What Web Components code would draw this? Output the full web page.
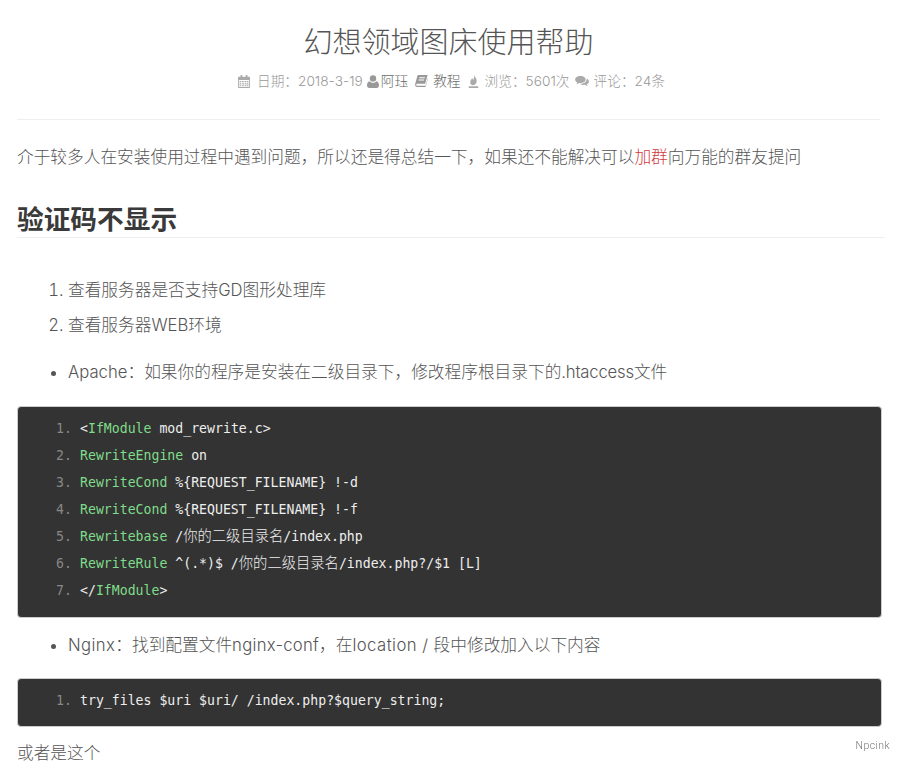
<!DOCTYPE html>
<html lang="zh">
<head>
<meta charset="utf-8">
<title>幻想领域图床使用帮助</title>
<style>
  html, body { margin: 0; background: #fff; overflow: hidden; height: 761px; }
  body {
    font-family: Inter, "Noto Sans CJK SC", sans-serif;
    color: #555;
  }
</style>
</head>
<body>
<post-page>
  <post-header title="幻想领域图床使用帮助">
    <meta-item icon="calendar" style="--gap:7px;--after:4px">日期：2018-3-19</meta-item>
    <meta-item icon="user" dark style="--gap:2px;--after:7px">阿珏</meta-item>
    <meta-item icon="book" dark style="--gap:5px;--after:7px">教程</meta-item>
    <meta-item icon="fire" style="--gap:6px;--after:5px">浏览：5601次</meta-item>
    <meta-item icon="comments" style="--gap:5px">评论：24条</meta-item>
  </post-header>

  <post-text>介于较多人在安装使用过程中遇到问题，所以还是得总结一下，如果还不能解决可以<span style="color:#d0393e">加群</span>向万能的群友提问</post-text>

  <section-title>验证码不显示</section-title>

  <post-list type="ol" style="margin-top:39px">
    <li>查看服务器是否支持GD图形处理库</li>
    <li>查看服务器WEB环境</li>
  </post-list>
  <post-list type="ul" style="margin-top:21px">
    <li>Apache：如果你的程序是安装在二级目录下，修改程序根目录下的<span style="letter-spacing:-.2px">.htaccess</span>文件</li>
  </post-list>

  <code-block style="margin-top:21px" lines='[
    "&lt;[IfModule] mod_rewrite.c&gt;",
    "[RewriteEngine] on",
    "[RewriteCond] %{REQUEST_FILENAME} !-d",
    "[RewriteCond] %{REQUEST_FILENAME} !-f",
    "[Rewritebase] /{你的二级目录名}/index.php",
    "[RewriteRule] ^(.*)$ /{你的二级目录名}/index.php?/$1 [L]",
    "&lt;/[IfModule]&gt;"
  ]'></code-block>

  <post-list type="ul" style="margin-top:14px">
    <li><span style="letter-spacing:.4px">Nginx</span>：找到配置文件<span style="letter-spacing:.25px">nginx-conf</span>，在<span style="letter-spacing:.45px">location / </span>段中修改加入以下内容</li>
  </post-list>

  <code-block style="margin-top:20px;--pb:12px" lines='["try_files $uri $uri/ /index.php?$query_string;"]'></code-block>

  <post-text style="margin-top:13px">或者是这个</post-text>
</post-page>
<water-mark>Npcink</water-mark>

<script>
const ICONS = {
  calendar: '<svg viewBox="0 0 14 14" width="12" height="13" preserveAspectRatio="none"><path fill="currentColor" d="M3 0h2v2h4V0h2v2h2a1 1 0 0 1 1 1v10a1 1 0 0 1-1 1H1a1 1 0 0 1-1-1V3a1 1 0 0 1 1-1h2zM1 5.500v7.500h12V5.500zM1.800 6.500h2v1.300h-2zM4.800 6.500h2v1.300h-2zM7.800 6.500h2v1.300h-2zM10.400 6.500h1.800v1.300h-1.800zM1.800 8.800h2v1.300h-2zM4.800 8.800h2v1.300h-2zM7.800 8.800h2v1.300h-2zM10.400 8.800h1.800v1.300h-1.800zM1.800 11h2v1.200h-2zM4.800 11h2v1.200h-2zM7.800 11h2v1.200h-2zM10.400 11h1.800v1.200h-1.800z" fill-rule="evenodd"/></svg>',
  user: '<svg viewBox="0 0 12 13" width="12" height="13"><circle fill="currentColor" cx="6" cy="3.400" r="3.200"/><path fill="currentColor" d="M2.600 6.200C3.500 7.200 4.700 7.800 6 7.800s2.500-.6 3.400-1.600C11 6.500 12 8 12 10.600c0 1.500-1 2.400-2.200 2.400H2.200C1 13 0 12.100 0 10.600 0 8 1 6.500 2.600 6.200z"/></svg>',
  book: '<svg viewBox="0 0 14 13" width="13" height="12"><path fill="currentColor" d="M3.600 0H13.600L11 9.500H2.200C1.500 9.500 1.300 10 1.300 10.500S1.700 11.700 2.500 11.700H11.500L13.800 3.300 14 3.800 11.700 12.300 11.200 13H2.300C1 13 0 11.800 0 10.300L2.600.9C2.800.4 3.100 0 3.600 0zM4.800 2.500L4.500 3.500H10.500L10.800 2.500zM4 5L3.700 6H9.700L10 5z" fill-rule="evenodd"/></svg>',
  fire: '<svg viewBox="0 0 12 14" width="11" height="13"><path fill="currentColor" d="M6.800 0C7.300 2 9.500 3.500 9.500 6.500 9.500 9 7.800 11 5.600 11 3.700 11 2.400 9.500 2.400 7.700 2.400 5.800 3.800 5 4.600 3.300 5.200 4 5.300 4.700 5.300 5.500 6.500 4.200 7.200 2.200 6.800 0zM.8 12.300H11.200V14H.8z"/></svg>',
  comments: '<svg viewBox="0 0 15 12" width="14" height="11"><path fill="currentColor" d="M5.800 0C9 0 11.500 1.700 11.500 3.900S9 7.800 5.800 7.800c-.5 0-1 0-1.500-.1C3.500 8.400 2.500 8.800 1.400 9c.4-.6.700-1.200.8-1.900C.8 6.400 0 5.200 0 3.900 0 1.700 2.600 0 5.800 0zM12.700 2.800C14.100 3.500 15 4.600 15 5.900c0 1.300-.8 2.400-2.100 3.100.1.800.4 1.400.9 2-1.200-.2-2.200-.7-3-1.400-.5.100-1 .1-1.500.1-1.500 0-2.800-.4-3.800-1 4.300-.1 7.200-2.400 7.200-5.300z"/></svg>'
};

class PostPage extends HTMLElement {
  connectedCallback() {
    this.attachShadow({ mode: 'open' }).innerHTML = `
      <style>
        :host { display: block; padding: 0 18px 0 17px; }
      </style>
      <slot></slot>`;
  }
}

class PostHeader extends HTMLElement {
  connectedCallback() {
    this.attachShadow({ mode: 'open' }).innerHTML = `
      <style>
        :host { display: block; border-bottom: 1px solid #eee; height: 119px; margin-right: 2px; }
        h1 {
          margin: 0; padding-top: 23px; text-align: center;
          font: 300 29px/40px Inter, "Noto Sans CJK SC", sans-serif;
          color: #555;
        }
        .meta {
          display: flex; justify-content: center; align-items: center;
          margin-top: 8px; height: 20px; padding-left: 6px;
        }
      </style>
      <h1>${this.getAttribute('title')}</h1>
      <div class="meta"><slot></slot></div>`;
  }
}

class MetaItem extends HTMLElement {
  connectedCallback() {
    const icon = ICONS[this.getAttribute('icon')];
    this.attachShadow({ mode: 'open' }).innerHTML = `
      <style>
        :host {
          display: inline-flex; align-items: center; gap: var(--gap, 5px);
          margin-right: var(--after, 0);
          font: 300 13.700px/20px Inter, "Noto Sans CJK SC", sans-serif;
          color: #999;
        }
        :host([dark]) { color: #666; }
        svg { display: block; color: #aaa; }
        :host([dark]) svg { color: #999; }
      </style>
      ${icon}<slot></slot>`;
  }
}

class PostText extends HTMLElement {
  connectedCallback() {
    this.attachShadow({ mode: 'open' }).innerHTML = `
      <style>
        :host {
          display: block; margin-top: 24px;
          font: 300 16.700px/26px Inter, "Noto Sans CJK SC", sans-serif;
          color: #555;
        }
      </style>
      <slot></slot>`;
  }
}

class SectionTitle extends HTMLElement {
  connectedCallback() {
    this.attachShadow({ mode: 'open' }).innerHTML = `
      <style>
        :host {
          display: block; margin-top: 29px; height: 38px; margin-right: -3px;
          border-bottom: 1px solid #eee;
          font: 700 26.700px/40px Inter, "Noto Sans CJK SC", sans-serif;
          color: #3a3a3a;
        }
      </style>
      <slot></slot>`;
  }
}

class PostList extends HTMLElement {
  connectedCallback() {
    const items = [...this.querySelectorAll('li')].map(li => `<li>${li.innerHTML}</li>`).join('');
    const tag = this.getAttribute('type') === 'ol' ? 'ol' : 'ul';
    this.attachShadow({ mode: 'open' }).innerHTML = `
      <style>
        :host {
          display: block;
          font: 300 16.700px/26px Inter, "Noto Sans CJK SC", sans-serif;
          color: #555;
        }
        ol, ul { margin: 0; padding-left: 51px; }
        li { margin-bottom: 9px; }
        li:last-child { margin-bottom: 0; }
      </style>
      <${tag}>${items}</${tag}>`;
  }
}

class CodeBlock extends HTMLElement {
  connectedCallback() {
    const lines = JSON.parse(this.getAttribute('lines'));
    const rows = lines.map((line, i) => {
      const html = line
        .replace(/</g, '&lt;')
        .replace(/\[([A-Za-z]{2,})\]/g, '<b>$1</b>')
        .replace(/\{([^\x00-\x7f]+)\}/g, '<i>$1</i>');
      return `<li><span class="n">${i + 1}.</span><span class="c">${html}</span></li>`;
    }).join('');
    this.attachShadow({ mode: 'open' }).innerHTML = `
      <style>
        :host {
          display: block; padding: 8px 0 var(--pb, 13px);
          background: #333; border: 1px solid #ccc; border-radius: 4px;
          font: 13.200px/27px "DejaVu Sans Mono", "Liberation Mono", monospace;
          color: #eee;
        }
        ol { margin: 0; padding: 0 0 0 38px; list-style: none; }
        li { display: flex; align-items: baseline; height: 27px; white-space: pre; }
        .n { width: 24px; color: #888; }
        b { font-weight: normal; color: #7fdc8a; }
        i { font: 300 14.300px/0 "Noto Sans CJK SC", sans-serif; }
      </style>
      <ol>${rows}</ol>`;
  }
}

class WaterMark extends HTMLElement {
  connectedCallback() {
    this.attachShadow({ mode: 'open' }).innerHTML = `
      <style>
        :host {
          position: fixed; right: 10px; top: 739px;
          font: 300 10.500px/14px Roboto, sans-serif;
          letter-spacing: .4px; color: #777;
        }
      </style>
      <slot></slot>`;
  }
}

customElements.define('post-page', PostPage);
customElements.define('post-header', PostHeader);
customElements.define('meta-item', MetaItem);
customElements.define('post-text', PostText);
customElements.define('section-title', SectionTitle);
customElements.define('post-list', PostList);
customElements.define('code-block', CodeBlock);
customElements.define('water-mark', WaterMark);
</script>
</body>
</html>
